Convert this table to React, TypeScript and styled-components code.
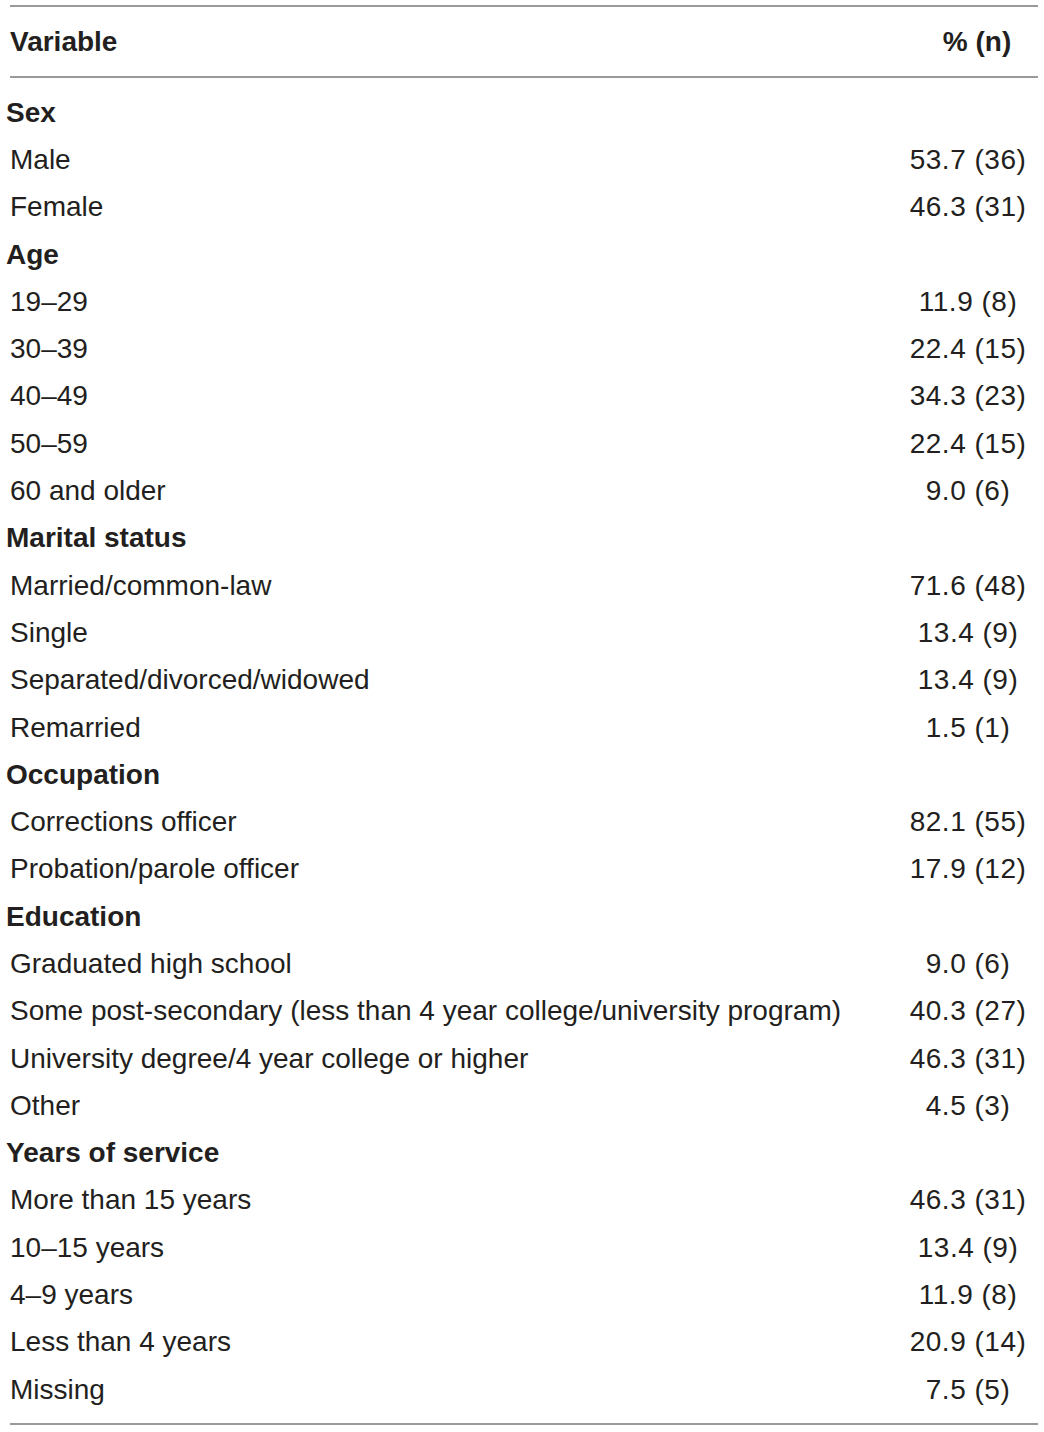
import React from 'react';
import styled, { createGlobalStyle } from 'styled-components';

const GlobalStyle = createGlobalStyle`
  body {
    margin: 0;
    background: #ffffff;
    font-family: 'Liberation Sans', Arial, Helvetica, sans-serif;
    color: #231f20;
  }
`;

const TableWrap = styled.div`
  width: 1044px;
  padding-top: 5px;
`;

const Rule = styled.div`
  margin-left: 10px;
  width: 1028px;
  height: 2px;
  background: #9a9a9a;
`;

const HeaderRow = styled.div`
  display: grid;
  grid-template-columns: 880px 1fr;
  align-items: center;
  height: 69px;
  font-size: 28px;
  font-weight: 700;
`;

const HeaderLabel = styled.div`
  padding-left: 10px;
`;

const HeaderValue = styled.div`
  text-align: center;
  padding-left: 30px;
`;

const Body = styled.div`
  padding: 11px 0 10px;
`;

const Row = styled.div<{ $section?: boolean }>`
  display: grid;
  grid-template-columns: 880px 1fr;
  align-items: center;
  height: 47.3px;
  font-size: 28px;
  font-weight: ${(p) => (p.$section ? 700 : 400)};
`;

const Label = styled.div<{ $section?: boolean }>`
  padding-left: ${(p) => (p.$section ? '6px' : '10px')};
  white-space: nowrap;
`;

const Value = styled.div`
  text-align: center;
  padding-left: 12px;
  letter-spacing: 0.5px;
  white-space: nowrap;
`;

type Item = [string, string];
type Section = { title: string; items: Item[] };

const sections: Section[] = [
  { title: 'Sex', items: [['Male', '53.7 (36)'], ['Female', '46.3 (31)']] },
  {
    title: 'Age',
    items: [
      ['19–29', '11.9 (8)'],
      ['30–39', '22.4 (15)'],
      ['40–49', '34.3 (23)'],
      ['50–59', '22.4 (15)'],
      ['60 and older', '9.0 (6)'],
    ],
  },
  {
    title: 'Marital status',
    items: [
      ['Married/common-law', '71.6 (48)'],
      ['Single', '13.4 (9)'],
      ['Separated/divorced/widowed', '13.4 (9)'],
      ['Remarried', '1.5 (1)'],
    ],
  },
  {
    title: 'Occupation',
    items: [
      ['Corrections officer', '82.1 (55)'],
      ['Probation/parole officer', '17.9 (12)'],
    ],
  },
  {
    title: 'Education',
    items: [
      ['Graduated high school', '9.0 (6)'],
      ['Some post-secondary (less than 4 year college/university program)', '40.3 (27)'],
      ['University degree/4 year college or higher', '46.3 (31)'],
      ['Other', '4.5 (3)'],
    ],
  },
  {
    title: 'Years of service',
    items: [
      ['More than 15 years', '46.3 (31)'],
      ['10–15 years', '13.4 (9)'],
      ['4–9 years', '11.9 (8)'],
      ['Less than 4 years', '20.9 (14)'],
      ['Missing', '7.5 (5)'],
    ],
  },
];

export default function App(): JSX.Element {
  return (
    <>
      <GlobalStyle />
      <TableWrap>
        <Rule />
        <HeaderRow>
          <HeaderLabel>Variable</HeaderLabel>
          <HeaderValue>% (n)</HeaderValue>
        </HeaderRow>
        <Rule />
        <Body>
          {sections.map((s) => (
            <React.Fragment key={s.title}>
              <Row $section>
                <Label $section>{s.title}</Label>
                <Value />
              </Row>
              {s.items.map(([label, value]) => (
                <Row key={label}>
                  <Label>{label}</Label>
                  <Value>{value}</Value>
                </Row>
              ))}
            </React.Fragment>
          ))}
        </Body>
        <Rule />
      </TableWrap>
    </>
  );
}
